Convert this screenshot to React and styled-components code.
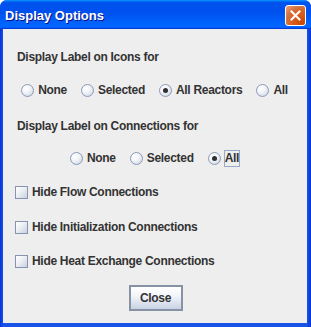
import React from 'react';
import styled, { createGlobalStyle } from 'styled-components';

const Global = createGlobalStyle`
  html, body {
    margin: 0;
    padding: 0;
    background: #ffffff;
  }
`;

const Window = styled.div`
  width: 311px;
  height: 327px;
  box-sizing: border-box;
  display: flex;
  flex-direction: column;
  border-radius: 7px 7px 0 0;
  overflow: hidden;
  background: linear-gradient(90deg, #0831d9 0, #1653e6 3px, #1653e6 307px, #0831d9 100%);
  font-family: "Liberation Sans", Arial, sans-serif;
`;

const TitleBar = styled.div`
  height: 29px;
  flex: none;
  display: flex;
  align-items: center;
  justify-content: space-between;
  padding: 0 5px 0 5px;
  background: linear-gradient(
    #0997ff 0,
    #0053ee 8%,
    #0050ee 40%,
    #0066ff 88%,
    #0066ff 93%,
    #005bff 95%,
    #003dd7 96%,
    #003dd7 100%
  );
`;

const Title = styled.span`
  color: #ffffff;
  font-weight: bold;
  font-size: 13px;
  text-shadow: 1px 1px #0f1089;
  margin-top: 2px;
`;

const CloseX = styled.div`
  width: 19px;
  height: 19px;
  border: 1px solid #ffffff;
  border-radius: 3px;
  background: radial-gradient(circle at 90% 90%, #cc4600 0%, #dc6527 55%, #cd7546 70%, #e88b5f 85%, #f0a070 100%);
  display: flex;
  align-items: center;
  justify-content: center;
  margin-top: 1px;
`;

const Body = styled.div`
  flex: 1;
  margin: 0 4px 4px 3px;
  background: #eeeeee;
  display: flex;
  flex-direction: column;
  padding-top: 18px;
  color: #333333;
  font-size: 12px;
  font-weight: bold;
  letter-spacing: -0.3px;
`;

const Label = styled.div`
  height: 20px;
  line-height: 20px;
  padding-left: 14px;
  margin-top: ${({ $top }) => $top || 0}px;
`;

const RadioRow = styled.div`
  height: 20px;
  display: flex;
  justify-content: center;
  align-items: center;
  gap: 13px;
  margin-top: ${({ $top }) => $top || 0}px;
`;

const Option = styled.label`
  display: flex;
  align-items: center;
  gap: 3px;
  white-space: nowrap;
`;

const Circle = styled.span`
  width: 11px;
  height: 11px;
  border-radius: 50%;
  border: 1px solid #8a9bb8;
  background: radial-gradient(circle at 35% 30%, #ffffff 0%, #f2f4f8 40%, #c7d0df 100%);
  display: flex;
  align-items: center;
  justify-content: center;
  flex: none;

  &::after {
    content: '';
    width: 5px;
    height: 5px;
    border-radius: 50%;
    background: #2f2f2f;
    display: ${({ $on }) => ($on ? 'block' : 'none')};
  }
`;

const Text = styled.span`
  padding: 0;
  border: 1px solid ${({ $focus }) => ($focus ? '#99a8c5' : 'transparent')};
  line-height: 15px;
`;

const CheckRow = styled.label`
  height: 20px;
  display: flex;
  align-items: center;
  gap: 3px;
  padding-left: 12px;
  margin-top: ${({ $top }) => $top || 0}px;
`;

const Box = styled.span`
  width: 11px;
  height: 11px;
  border: 1px solid #8595ae;
  background: linear-gradient(135deg, #ffffff 0%, #eef1f6 40%, #c9d1de 100%);
  flex: none;
`;

const Footer = styled.div`
  display: flex;
  justify-content: center;
  margin-top: 14px;
  padding-left: 1px;
`;

const Button = styled.button`
  width: 54px;
  height: 26px;
  box-sizing: border-box;
  border: 2px solid #8792a4;
  background: linear-gradient(#ffffff 0%, #f2f5fa 40%, #c9d3e4 100%);
  font-family: inherit;
  font-size: 12px;
  font-weight: bold;
  letter-spacing: -0.3px;
  color: #333333;
  padding: 0;
`;

const Radio = ({ label, on, focus }) => (
  <Option>
    <Circle $on={on} />
    <Text $focus={focus}>{label}</Text>
  </Option>
);

const Check = ({ label, top }) => (
  <CheckRow $top={top}>
    <Box />
    <Text>{label}</Text>
  </CheckRow>
);

const App = () => {
  return (
    <>
      <Global />
      <Window>
        <TitleBar>
          <Title>Display Options</Title>
          <CloseX>
            <svg width="11" height="11" viewBox="0 0 11 11">
              <path d="M1.5 1.5 L9.5 9.5 M9.5 1.5 L1.5 9.5" stroke="#ffffff" strokeWidth="2" strokeLinecap="square" />
            </svg>
          </CloseX>
        </TitleBar>
        <Body>
          <Label>Display Label on Icons for</Label>
          <RadioRow $top={13}>
            <Radio label="None" />
            <Radio label="Selected" />
            <Radio label="All Reactors" on />
            <Radio label="All" />
          </RadioRow>
          <Label $top={16}>Display Label on Connections for</Label>
          <RadioRow $top={12}>
            <Radio label="None" />
            <Radio label="Selected" />
            <Radio label="All" on focus />
          </RadioRow>
          <Check label="Hide Flow Connections" top={14} />
          <Check label="Hide Initialization Connections" top={15} />
          <Check label="Hide Heat Exchange Connections" top={14} />
          <Footer>
            <Button>Close</Button>
          </Footer>
        </Body>
      </Window>
    </>
  );
};

export default App;
